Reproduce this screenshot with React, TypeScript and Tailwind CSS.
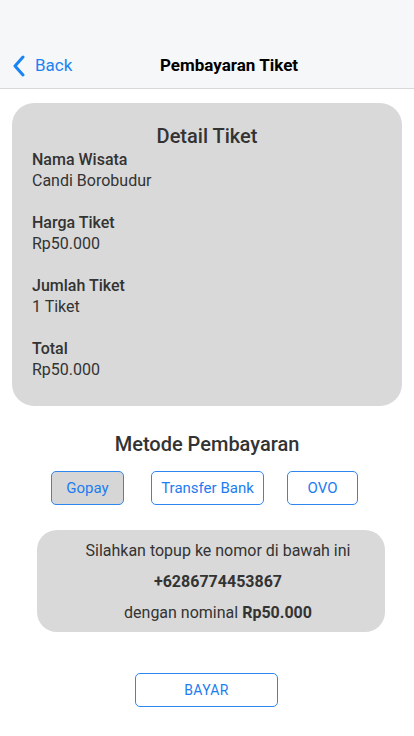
import React, { useState } from 'react';

const rows = [
  { label: 'Nama Wisata', value: 'Candi Borobudur' },
  { label: 'Harga Tiket', value: 'Rp50.000' },
  { label: 'Jumlah Tiket', value: '1 Tiket' },
  { label: 'Total', value: 'Rp50.000' },
];

const methods = [
  { name: 'Gopay', cls: 'w-[73px]' },
  { name: 'Transfer Bank', cls: 'w-[113px]' },
  { name: 'OVO', cls: 'w-[71px]' },
];

export default function App() {
  const [method, setMethod] = useState('Gopay');

  return (
    <div className="w-[414px] h-[736px] bg-white font-['Roboto',sans-serif] text-[#333]">
      {/* Header */}
      <div className="h-[89px] bg-[#f6f7f9] border-b border-[#d8d8d8] flex items-end pb-[10px] relative">
        <button className="flex items-center pl-[12px] text-[#1a84f3] h-[24px]">
          <svg width="14" height="22" viewBox="0 0 14 22" fill="none">
            <path d="M11 2L3 11L11 20" stroke="currentColor" strokeWidth="3" strokeLinecap="round" strokeLinejoin="round" />
          </svg>
          <span className="ml-[9px] text-[17px]">Back</span>
        </button>
        <div className="absolute left-[160px] bottom-[10px] h-[24px] flex items-center text-[17px] font-bold text-black">
          Pembayaran Tiket
        </div>
      </div>

      {/* Detail card */}
      <div className="mx-[12px] mt-[14px] h-[303px] bg-[#d9d9d9] rounded-[22px] pt-[20px] px-[20px]">
        <div className="text-center text-[20px] font-medium leading-[26px]">Detail Tiket</div>
        <div className="flex flex-col gap-[21px]">
          {rows.map((r) => (
            <div key={r.label} className="text-[16px] leading-[21px]">
              <div className="font-medium">{r.label}</div>
              <div>{r.value}</div>
            </div>
          ))}
        </div>
      </div>

      {/* Payment method */}
      <div className="mt-[23px] text-center text-[20px] font-medium leading-[30px]">Metode Pembayaran</div>
      <div className="mt-[12px] flex items-center pl-[51px] gap-[27px] h-[34px]">
        {methods.map((m, i) => (
          <button
            key={m.name}
            onClick={() => setMethod(m.name)}
            className={`${m.cls} ${i === 2 ? '-ml-[4px]' : ''} h-[34px] rounded-[5px] border border-[#2f86ee] text-[15px] text-[#1c7cf0] ${method === m.name ? 'bg-[#d6d6d6]' : 'bg-white'}`}
          >
            {m.name}
          </button>
        ))}
      </div>

      {/* Info box */}
      <div className="ml-[37px] mr-[29px] mt-[25px] h-[102px] bg-[#d9d9d9] rounded-[20px] flex flex-col items-center justify-center pl-[14px] text-[16px] leading-[31px] text-[#333]">
        <div>Silahkan topup ke nomor di bawah ini</div>
        <div className="font-bold">+6286774453867</div>
        <div>
          dengan nominal <span className="font-bold">Rp50.000</span>
        </div>
      </div>

      {/* Pay */}
      <div className="mt-[41px] flex justify-center pr-[1px]">
        <button className="w-[143px] h-[34px] rounded-[5px] border border-[#2f86ee] text-[14px] text-[#1c7cf0] bg-white tracking-wide">
          BAYAR
        </button>
      </div>
    </div>
  );
}
